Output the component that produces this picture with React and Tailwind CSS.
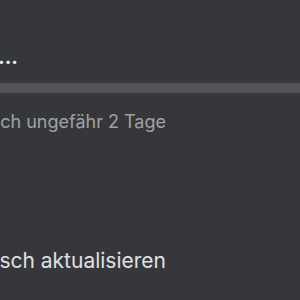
export default function App() {
  return (
    <div className="w-[300px] h-[300px] bg-[#36373b] overflow-hidden font-['Inter',sans-serif] flex flex-col">
      <div className="h-[45px]" />
      <div className="w-[18px] h-[24px] flex justify-end items-center overflow-hidden whitespace-nowrap text-[20px] font-bold text-[#ececec]">
        <span>Wird heruntergeladen...</span>
      </div>
      <div className="h-[14px]" />
      <div className="h-[10px] bg-[#535458]" />
      <div className="h-[17px]" />
      <div className="w-[166px] flex justify-end overflow-hidden whitespace-nowrap text-[18px] leading-[24px] text-[#a0a1a5]">
        <span>Verbleibend: noch ungefähr 2 Tage</span>
      </div>
      <div className="h-[114px]" />
      <div className="w-[166px] flex justify-end overflow-hidden whitespace-nowrap text-[21px] leading-[26px] text-[#e0e0e0]">
        <span>Automatisch aktualisieren</span>
      </div>
    </div>
  );
}
